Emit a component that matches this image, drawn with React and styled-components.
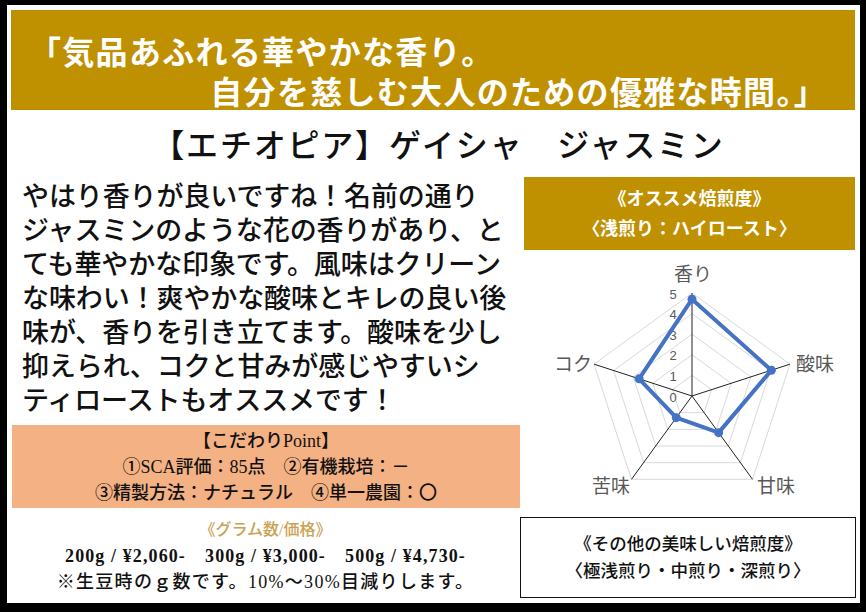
import React from "react";
import styled, { createGlobalStyle } from "styled-components";

const GlobalStyle = createGlobalStyle`
  html, body { margin: 0; padding: 0; background: #000; }
  body { font-family: "Liberation Serif", "Noto Sans CJK JP", serif; }
`;

const Frame = styled.div`
  width: 866px;
  height: 612px;
  box-sizing: border-box;
  background: #000;
  padding: 5px 6px 9px 7px;
`;

const Sheet = styled.div`
  width: 100%;
  height: 100%;
  box-sizing: border-box;
  background: #fff;
  padding: 5px 4px 0 4px;
  display: flex;
  flex-direction: column;
`;

const Banner = styled.div`
  height: 100px;
  width: 844px;
  box-sizing: border-box;
  background: #bf9000;
  color: #fff;
  font-family: "Noto Sans CJK JP", sans-serif;
  font-weight: 700;
  font-size: 32px;
  line-height: 40px;
  letter-spacing: 1.3px;
  padding: 20px 28px 0 18px;
  display: flex;
  flex-direction: column;
`;

const BannerLine = styled.div`
  text-align: ${(p) => (p.$right ? "right" : "left")};
  white-space: nowrap;
`;

const Title = styled.h1`
  margin: 0;
  height: 67px;
  line-height: 67px;
  text-align: center;
  font-family: "Noto Sans CJK JP", sans-serif;
  font-weight: 500;
  font-size: 32px;
  letter-spacing: 1.8px;
  color: #111;
  padding-left: 10px;
  white-space: nowrap;
`;

const Body = styled.div`
  display: grid;
  grid-template-columns: 509px 336px;
  flex: 1;
`;

const LeftCol = styled.div`
  display: flex;
  flex-direction: column;
`;

const RightCol = styled.div`
  display: flex;
  flex-direction: column;
`;

const Description = styled.p`
  margin: 0;
  padding: 1px 0 0 11px;
  height: 238px;
  font-family: "Noto Sans CJK JP", sans-serif;
  font-weight: 500;
  font-size: 27px;
  line-height: 34px;
  color: #111;
  white-space: pre-line;
  letter-spacing: -0.1px;
`;

const PointBox = styled.div`
  margin: 9px 0 0 1px;
  height: 83px;
  background: #f4b183;
  display: flex;
  flex-direction: column;
  justify-content: center;
  align-items: center;
  font-family: "Liberation Serif", "Noto Sans CJK JP", serif;
  font-weight: 500;
  font-size: 18px;
  line-height: 26px;
  color: #111;
`;

const Line = styled.div`
  white-space: pre;
  text-align: center;
`;

const PriceBlock = styled.div`
  margin-top: 9px;
  display: flex;
  flex-direction: column;
  align-items: center;
  font-family: "Liberation Serif", "Noto Sans CJK JP", serif;
  line-height: 26px;
  color: #111;
`;

const PriceHeading = styled.div`
  color: #c9a255;
  font-size: 16px;
  font-weight: 500;
`;

const PriceLine = styled.div`
  font-size: ${(p) => p.$size || 17}px;
  font-weight: ${(p) => p.$weight || 700};
  white-space: pre;
  letter-spacing: ${(p) => p.$spacing || 0}px;
`;

const RoastBox = styled.div`
  margin: 0 1px 0 4px;
  height: 73px;
  background: #bf9000;
  color: #fff;
  display: flex;
  flex-direction: column;
  justify-content: center;
  align-items: center;
  font-family: "Liberation Serif", "Noto Sans CJK JP", serif;
  font-weight: 700;
  font-size: 18px;
  line-height: 30px;
`;

const ChartSvg = styled.svg`
  display: block;
  width: 336px;
  height: 267px;
`;

const OtherBox = styled.div`
  height: 81px;
  box-sizing: border-box;
  border: 1.5px solid #111;
  display: flex;
  flex-direction: column;
  justify-content: center;
  align-items: center;
  font-family: "Liberation Serif", "Noto Sans CJK JP", serif;
  font-weight: 500;
  font-size: 17.5px;
  line-height: 27px;
  color: #111;
`;

const axes = [
  { label: "香り", value: 4.7, lx: 173, ly: 22 },
  { label: "酸味", value: 4.05, lx: 295, ly: 112 },
  { label: "甘味", value: 2.2, lx: 256, ly: 234 },
  { label: "苦味", value: 1.3, lx: 91, ly: 234 },
  { label: "コク", value: 2.7, lx: 53, ly: 112 },
];

const CX = 172;
const CY = 146;
const R = 103;

function pt(i, r) {
  const a = (Math.PI * 2 * i) / 5;
  return [CX + r * Math.sin(a), CY - r * Math.cos(a)];
}

function RadarChart() {
  const levels = [1, 2, 3, 4, 5];
  const data = axes.map((a, i) => pt(i, (a.value / 5) * R));
  return (
    <ChartSvg viewBox="0 0 336 267">
      {levels.map((l) => (
        <polygon
          key={l}
          points={axes.map((_, i) => pt(i, (l / 5) * R).join(",")).join(" ")}
          fill="none"
          stroke="#d9d9d9"
          strokeWidth="1"
        />
      ))}
      {axes.map((_, i) => {
        const [x, y] = pt(i, R);
        return <line key={i} x1={CX} y1={CY} x2={x} y2={y} stroke="#222" strokeWidth="1" />;
      })}
      {[0, 1, 2, 3, 4, 5].map((n) => (
        <text
          key={n}
          x={153}
          y={CY - (n / 5) * R + 1}
          fontFamily="'Liberation Sans', sans-serif"
          fontSize="13"
          fill="#595959"
          textAnchor="middle"
          dominantBaseline="central"
        >
          {n}
        </text>
      ))}
      <polygon
        points={data.map((p) => p.join(",")).join(" ")}
        fill="none"
        stroke="#4472c4"
        strokeWidth="4"
        strokeLinejoin="round"
      />
      {data.map(([x, y], i) => (
        <circle key={i} cx={x} cy={y} r="4.5" fill="#4472c4" />
      ))}
      {axes.map((a) => (
        <text
          key={a.label}
          x={a.lx}
          y={a.ly}
          fontFamily="'Noto Sans CJK JP', sans-serif"
          fontSize="19"
          fill="#595959"
          textAnchor="middle"
          dominantBaseline="central"
        >
          {a.label}
        </text>
      ))}
    </ChartSvg>
  );
}

export default function App() {
  return (
    <>
      <GlobalStyle />
      <Frame>
        <Sheet>
          <Banner>
            <BannerLine>「気品あふれる華やかな香り。</BannerLine>
            <BannerLine $right>自分を慈しむ大人のための優雅な時間。」</BannerLine>
          </Banner>
          <Title>【エチオピア】ゲイシャ　ジャスミン</Title>
          <Body>
            <LeftCol>
              <Description>
                {"やはり香りが良いですね！名前の通り\nジャスミンのような花の香りがあり、と\nても華やかな印象です。風味はクリーン\nな味わい！爽やかな酸味とキレの良い後\n味が、香りを引き立てます。酸味を少し\n抑えられ、コクと甘みが感じやすいシ\nティローストもオススメです！"}
              </Description>
              <PointBox>
                <Line>【こだわりPoint】</Line>
                <Line>①SCA評価：85点　②有機栽培：－</Line>
                <Line>③精製方法：ナチュラル　④単一農園：〇</Line>
              </PointBox>
              <PriceBlock>
                <PriceHeading>《グラム数/価格》</PriceHeading>
                <PriceLine $size={18} $weight={700} $spacing={1.1}>
                  {"200g / ¥2,060-　300g / ¥3,000-　500g / ¥4,730-"}
                </PriceLine>
                <PriceLine $size={18} $weight={500} $spacing={1.3}>
                  ※生豆時のｇ数です。10%～30%目減りします。
                </PriceLine>
              </PriceBlock>
            </LeftCol>
            <RightCol>
              <RoastBox>
                <div>《オススメ焙煎度》</div>
                <div>〈浅煎り：ハイロースト〉</div>
              </RoastBox>
              <RadarChart />
              <OtherBox>
                <div>《その他の美味しい焙煎度》</div>
                <div>〈極浅煎り・中煎り・深煎り〉</div>
              </OtherBox>
            </RightCol>
          </Body>
        </Sheet>
      </Frame>
    </>
  );
}
